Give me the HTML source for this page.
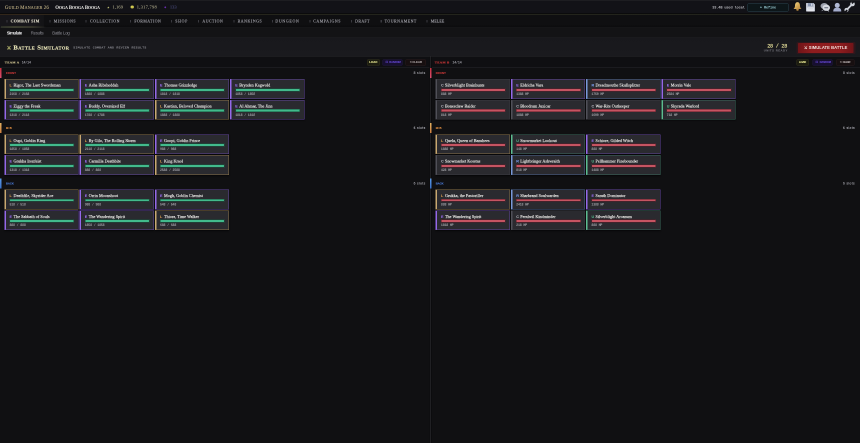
<!DOCTYPE html>
<html><head><meta charset="utf-8"><style>
html,body{margin:0;padding:0;background:#101012;width:860px;height:443px;overflow:hidden}
#root{position:absolute;left:0;top:0;width:1720px;height:886px;transform:scale(.5);transform-origin:0 0;will-change:transform;background:#101012;font-family:"Liberation Sans",sans-serif;overflow:hidden}
.abs{position:absolute}
.t{position:absolute;white-space:nowrap}
.sc{font-size:84%}
.ni{top:40px;width:2px;height:5px;background:#3a3a40}
.lab{font-size:7.2px;line-height:7.2px;font-weight:bold;letter-spacing:.7px}
.slots{font-size:7px;line-height:7px;color:#86868e}
.card{position:absolute;box-sizing:border-box;width:148.5px;height:39.4px;background:#2a2a2f;border:1.2px solid;border-left-width:3.2px;box-shadow:0 1.5px 2.5px rgba(0,0,0,.6)}
.nm{position:absolute;left:7.6px;top:5.8px;font-family:'Liberation Serif',serif;font-weight:normal;font-size:8.3px;line-height:12px;color:#ecebe8;white-space:nowrap;letter-spacing:.05px;-webkit-text-stroke:.25px #ecebe8}
.rl{display:inline-block;width:8px;font-family:"Liberation Sans",sans-serif;font-size:7.4px;font-weight:bold;-webkit-text-stroke:0}
.bar{position:absolute;left:7.6px;right:7.8px;top:17.4px;height:5.8px;border-radius:1.2px}
.ba{background:#42ba8c;box-shadow:inset 0 0 0 1.1px #17523c}
.bb{background:#c65462;box-shadow:inset 0 0 0 1.1px #581c26}
.hp{position:absolute;left:7.4px;top:24.6px;font-family:'Liberation Mono',monospace;font-size:6.6px;line-height:9px;color:#9c9ca2;white-space:nowrap;font-weight:bold;letter-spacing:-.36px}
</style></head><body><div id="root">
<div class="abs" style="left:0;top:0;width:1720px;height:27px;background:#121217"></div>
<div class="abs" style="left:0;top:0;width:1720px;height:1.6px;background:#1d1d21"></div>
<div class="abs" style="left:0;top:25.5px;width:1720px;height:2.2px;background:#0b0b0c"></div>
<div class="abs" style="left:0;top:27.7px;width:1720px;height:2px;background:linear-gradient(90deg,#32261a,#2a261c 12%,#23241c 40%,#22231c)"></div>
<div class="t" id="t13" style="left:9.80px;top:9.80px;font-family:'Liberation Serif',serif;font-size:9.800px;line-height:9.8px;color:#ccbc8c;letter-spacing:0.227px;-webkit-text-stroke:.12px #ccbc8c;">G<span class="sc">UILD</span> M<span class="sc">ANAGER</span> 26</div>
<div class="t" id="t14" style="left:110.60px;top:10.10px;font-family:'Liberation Serif',serif;font-size:9.600px;line-height:9.6px;color:#f4f2ee;letter-spacing:-0.228px;font-weight:bold;">O<span class="sc">OGA</span> B<span class="sc">OOGA</span> B<span class="sc">OOGA</span></div>
<div class="t" id="t15" style="left:214.20px;top:11.59px;font-family:'Liberation Sans',sans-serif;font-size:6.000px;line-height:6px;color:#c8c878;letter-spacing:0.000px;">&#9733;</div>
<div class="t" id="t16" style="left:224.80px;top:10.01px;font-family:'Liberation Serif',serif;font-size:9.000px;line-height:9.0px;color:#cdc8a0;letter-spacing:0.237px;">1,169</div>
<div class="abs" style="left:260.5px;top:10.5px;width:7px;height:6.5px;border-radius:50%;background:radial-gradient(circle at 40% 40%,#e0d860,#a8a030)"></div>
<div class="t" id="t17" style="left:273.40px;top:10.01px;font-family:'Liberation Serif',serif;font-size:9.000px;line-height:9.0px;color:#cdc8a0;letter-spacing:0.500px;">1,317,798</div>
<div class="abs" style="left:329.2px;top:13px;width:2.8px;height:3px;background:#7030b8;transform:rotate(45deg)"></div>
<div class="t" id="t18" style="left:339.80px;top:10.01px;font-family:'Liberation Serif',serif;font-size:9.000px;line-height:9.0px;color:#5a5c9c;letter-spacing:-0.050px;">133</div>
<div class="t" id="t19" style="left:1424.40px;top:11.65px;font-family:'Liberation Mono',monospace;font-size:7.200px;line-height:7.2px;color:#b4b4ba;letter-spacing:-0.254px;font-weight:bold;">33.4B used local</div>
<div class="abs" style="left:1495.4px;top:6.6px;width:81.4px;height:16.2px;box-sizing:border-box;border:1.2px solid #284650;background:#0d1619;border-radius:1.5px"></div>
<div class="t" id="t20" style="left:1519.80px;top:11.65px;font-family:'Liberation Mono',monospace;font-size:7.200px;line-height:7.2px;color:#94c4cc;letter-spacing:-0.274px;font-weight:bold;">+ Refine</div>
<svg class="abs" style="left:1584px;top:3px" width="22" height="20" viewBox="0 0 22 20"><defs><linearGradient id="bg1" x1="0" y1="0" x2="1" y2="1"><stop offset="0" stop-color="#f0d890"/><stop offset=".5" stop-color="#d8ac58"/><stop offset="1" stop-color="#b08040"/></linearGradient></defs><path d="M11 1.2 C7.6 1.2 6 4.5 6 8.5 C6 11.5 4.8 13.3 3 15 L19 15 C17.2 13.3 16 11.5 16 8.5 C16 4.5 14.4 1.2 11 1.2Z" fill="url(#bg1)"/><ellipse cx="11" cy="16.6" rx="2.6" ry="2" fill="#b88a40"/></svg>
<svg class="abs" style="left:1611px;top:5px" width="20" height="19" viewBox="0 0 20 19"><path d="M1 2 Q1 1 2 1 L16 1 L19 4 L19 17 Q19 18 18 18 L2 18 Q1 18 1 17Z" fill="#c0c4d0"/><rect x="5" y="1" width="10" height="6.5" fill="#8a96b0"/><rect x="11.2" y="2" width="2.4" height="4.5" fill="#dfe2ea"/><rect x="3.5" y="10" width="13" height="8" fill="#eceef4"/><rect x="5" y="12" width="10" height=".8" fill="#b8bcc8"/><rect x="5" y="14.5" width="10" height=".8" fill="#b8bcc8"/></svg>
<svg class="abs" style="left:1640px;top:4.5px" width="21" height="19" viewBox="0 0 21 19"><ellipse cx="8.5" cy="7" rx="7.5" ry="6" fill="#9ca0ac"/><path d="M4 15 L3 17.5 L7 15.5Z" fill="#9ca0ac"/><ellipse cx="12.5" cy="10.5" rx="7.5" ry="6.3" fill="#d6d9e0"/><path d="M17 15.5 L18.5 18.5 L14 16.3Z" fill="#d6d9e0"/><rect x="8.5" y="9.6" width="8" height="2" rx="1" fill="#5e6474"/></svg>
<svg class="abs" style="left:1665px;top:4px" width="19" height="20" viewBox="0 0 19 20"><path d="M1.5 19 C1.5 13 4.5 11.5 9.5 11.5 C14.5 11.5 17.5 13 17.5 19Z" fill="#a4accc"/><circle cx="9.5" cy="6.8" r="5" fill="#b0b8d4"/></svg>
<svg class="abs" style="left:1688px;top:3px" width="24" height="22" viewBox="0 0 24 22"><path d="M6 16 L16 6" stroke="#cfd2da" stroke-width="3.8" stroke-linecap="round"/><circle cx="17" cy="5" r="4.6" fill="#cfd2da"/><rect x="16" y="-1.5" width="3.6" height="6" fill="#121217" transform="rotate(45 17.8 1.5)"/><circle cx="5" cy="17" r="4.2" fill="#cfd2da"/><rect x="2.6" y="16.5" width="3.6" height="6" fill="#121217" transform="rotate(45 4.4 19.5)"/></svg>
<div class="abs" style="left:0;top:29.7px;width:1720px;height:25px;background:linear-gradient(#0f0f11 75%,#0b0b0c)"></div>
<div class="abs" style="left:0;top:29.7px;width:88px;height:25px;background:linear-gradient(90deg,#17161a,#18171b 70%,#131315)"></div>
<div class="abs" style="left:2px;top:52.5px;width:90px;height:3px;background:linear-gradient(90deg,#3e4430,#5c6040 30%,#4a4a34 70%,rgba(60,60,40,0))"></div>
<div class="abs ni" style="left:12.6px"></div>
<div class="t" id="t1" style="left:21.20px;top:39.42px;font-family:'Liberation Serif',serif;font-size:7.800px;line-height:7.8px;color:#ece8d6;letter-spacing:0.706px;font-weight:bold;-webkit-text-stroke:.15px #ece8d6;">COMBAT SIM</div>
<div class="abs ni" style="left:98.8px"></div>
<div class="t" id="t2" style="left:107.40px;top:39.42px;font-family:'Liberation Serif',serif;font-size:7.800px;line-height:7.8px;color:#a0a0a8;letter-spacing:1.056px;-webkit-text-stroke:.25px #a0a0a8;">MISSIONS</div>
<div class="abs ni" style="left:171px"></div>
<div class="t" id="t3" style="left:180.00px;top:39.42px;font-family:'Liberation Serif',serif;font-size:7.800px;line-height:7.8px;color:#a0a0a8;letter-spacing:1.094px;-webkit-text-stroke:.25px #a0a0a8;">COLLECTION</div>
<div class="abs ni" style="left:260.2px"></div>
<div class="t" id="t4" style="left:268.80px;top:39.42px;font-family:'Liberation Serif',serif;font-size:7.800px;line-height:7.8px;color:#a0a0a8;letter-spacing:0.913px;-webkit-text-stroke:.25px #a0a0a8;">FORMATION</div>
<div class="abs ni" style="left:341.8px"></div>
<div class="t" id="t5" style="left:350.40px;top:39.42px;font-family:'Liberation Serif',serif;font-size:7.800px;line-height:7.8px;color:#a0a0a8;letter-spacing:1.421px;-webkit-text-stroke:.25px #a0a0a8;">SHOP</div>
<div class="abs ni" style="left:396.2px"></div>
<div class="t" id="t6" style="left:404.80px;top:39.42px;font-family:'Liberation Serif',serif;font-size:7.800px;line-height:7.8px;color:#a0a0a8;letter-spacing:0.951px;-webkit-text-stroke:.25px #a0a0a8;">AUCTION</div>
<div class="abs ni" style="left:467.2px"></div>
<div class="t" id="t7" style="left:475.20px;top:39.42px;font-family:'Liberation Serif',serif;font-size:7.800px;line-height:7.8px;color:#a0a0a8;letter-spacing:1.129px;-webkit-text-stroke:.25px #a0a0a8;">RANKINGS</div>
<div class="abs ni" style="left:543.6px"></div>
<div class="t" id="t8" style="left:550.80px;top:39.42px;font-family:'Liberation Serif',serif;font-size:7.800px;line-height:7.8px;color:#a0a0a8;letter-spacing:1.376px;-webkit-text-stroke:.25px #a0a0a8;">DUNGEON</div>
<div class="abs ni" style="left:619px"></div>
<div class="t" id="t9" style="left:626.40px;top:39.42px;font-family:'Liberation Serif',serif;font-size:7.800px;line-height:7.8px;color:#a0a0a8;letter-spacing:1.148px;-webkit-text-stroke:.25px #a0a0a8;">CAMPAIGNS</div>
<div class="abs ni" style="left:701.6px"></div>
<div class="t" id="t10" style="left:710.20px;top:39.42px;font-family:'Liberation Serif',serif;font-size:7.800px;line-height:7.8px;color:#a0a0a8;letter-spacing:0.809px;-webkit-text-stroke:.25px #a0a0a8;">DRAFT</div>
<div class="abs ni" style="left:760.6px"></div>
<div class="t" id="t11" style="left:769.20px;top:39.42px;font-family:'Liberation Serif',serif;font-size:7.800px;line-height:7.8px;color:#a0a0a8;letter-spacing:0.996px;-webkit-text-stroke:.25px #a0a0a8;">TOURNAMENT</div>
<div class="abs ni" style="left:852.8px"></div>
<div class="t" id="t12" style="left:861.40px;top:39.42px;font-family:'Liberation Serif',serif;font-size:7.800px;line-height:7.8px;color:#a0a0a8;letter-spacing:0.304px;-webkit-text-stroke:.25px #a0a0a8;">MELEE</div>
<div class="abs" style="left:0;top:54.6px;width:1720px;height:1.4px;background:#1f1f22"></div>
<div class="abs" style="left:0;top:56px;width:1720px;height:19px;background:#131315"></div>
<div class="t" id="t21" style="left:13.40px;top:62.48px;font-family:'Liberation Sans',sans-serif;font-size:8.600px;line-height:8.6px;color:#f0f0f2;letter-spacing:-0.690px;font-weight:bold;">Simulate</div>
<div class="abs" style="left:6px;top:75.8px;width:46.5px;height:2px;background:#b4b4b8"></div>
<div class="t" id="t22" style="left:61.60px;top:62.48px;font-family:'Liberation Sans',sans-serif;font-size:8.600px;line-height:8.6px;color:#8c8c94;letter-spacing:-0.509px;">Results</div>
<div class="t" id="t23" style="left:104.60px;top:62.48px;font-family:'Liberation Sans',sans-serif;font-size:8.600px;line-height:8.6px;color:#8c8c94;letter-spacing:-0.411px;">Battle Log</div>
<div class="abs" style="left:0;top:74.8px;width:1720px;height:1.4px;background:#212125"></div>
<div class="abs" style="left:0;top:76.2px;width:1720px;height:36px;background:linear-gradient(#18181c,#1a1a1e)"></div>
<div class="abs" style="left:0;top:111.6px;width:1720px;height:1.6px;background:#28282c"></div>
<svg class="abs" style="left:13.5px;top:91px" width="8" height="9" viewBox="0 0 8 9"><path d="M1 1 L7 8 M7 1 L1 8" stroke="#c8c878" stroke-width="1.3"/><path d="M0.5 6 L2.5 8.5 M7.5 6 L5.5 8.5" stroke="#c8c878" stroke-width="1"/></svg>
<div class="t" id="t24" style="left:26.80px;top:87.87px;font-family:'Liberation Serif',serif;font-size:13.200px;line-height:13.2px;color:#e6e2b6;letter-spacing:0.816px;font-weight:bold;font-variant:small-caps;-webkit-text-stroke:.35px #e6e2b6;">Battle Simulator</div>
<div class="t" id="t25" style="left:146.60px;top:93.09px;font-family:'Liberation Mono',monospace;font-size:6.200px;line-height:6.2px;color:#9a9aa2;letter-spacing:0.598px;-webkit-text-stroke:.15px #9a9aa2;">SIMULATE COMBAT AND REVIEW RESULTS</div>
<div class="t" id="t26" style="left:1534.40px;top:87.06px;font-family:'Liberation Mono',monospace;font-size:10.400px;line-height:10.4px;color:#e2dc98;letter-spacing:-0.543px;-webkit-text-stroke:.35px #e2dc98;">28 / 28</div>
<div class="t" id="t27" style="left:1527.40px;top:98.59px;font-family:'Liberation Sans',sans-serif;font-size:5.600px;line-height:5.6px;color:#7c7c84;letter-spacing:0.948px;font-weight:bold;">UNITS READY</div>
<div class="abs" style="left:1593px;top:83.5px;width:118px;height:24.5px;background:rgba(90,20,30,.35);border-radius:3px"></div>
<div class="abs" style="left:1595.8px;top:85.8px;width:111px;height:20.2px;background:linear-gradient(90deg,#701418,#8e1c1e 25%,#8e1c1e 75%,#701418);border-radius:1.5px"></div>
<div class="t" id="t28" style="left:1608.00px;top:92.08px;font-family:'Liberation Sans',sans-serif;font-size:8.200px;line-height:8.2px;color:#f2e4e0;letter-spacing:0.133px;font-weight:bold;">&#9876; SIMULATE BATTLE</div>
<div class="abs" style="left:0;top:112.7px;width:1720px;height:21.5px;background:#0f0f12"></div>
<div class="abs" style="left:0;top:134px;width:1720px;height:1.2px;background:#26252b"></div>
<div class="abs" style="left:858.8px;top:112.7px;width:4.8px;height:774px;background:#0c0c0e"></div>
<div class="abs" style="left:859.8px;top:112.7px;width:2.6px;height:774px;background:#202023"></div>
<div class="t" id="t29" style="left:9.60px;top:122.03px;font-family:'Liberation Serif',serif;font-size:6.600px;line-height:6.6px;color:#dcd09a;letter-spacing:0.554px;font-weight:bold;-webkit-text-stroke:.2px #dcd09a;">TEAM A</div>
<div class="t" id="t30" style="left:43.40px;top:122.92px;font-family:'Liberation Mono',monospace;font-size:6.600px;line-height:6.6px;color:#9a9aa2;letter-spacing:-0.299px;font-weight:bold;">14/14</div>
<div class="abs" style="left:734px;top:118.6px;width:26px;height:12px;box-sizing:border-box;border:1px solid #34341c;background:#1c1c10;border-radius:1.5px"></div>
<div class="t" id="t31" style="left:738.40px;top:121.59px;font-family:'Liberation Sans',sans-serif;font-size:5.600px;line-height:5.6px;color:#eaea94;letter-spacing:0.180px;font-weight:bold;-webkit-text-stroke:.2px #eaea94;">LOAD</div>
<div class="abs" style="left:764.6px;top:118.6px;width:40.0px;height:12px;box-sizing:border-box;border:1px solid #231846;background:#170f30;border-radius:1.5px"></div>
<div class="t" id="t32" style="left:770.60px;top:121.39px;font-family:'Liberation Sans',sans-serif;font-size:6.000px;line-height:6px;color:#6a4ae0;letter-spacing:0.000px;">&#9860;</div>
<div class="t" id="t33" style="left:778.60px;top:121.69px;font-family:'Liberation Sans',sans-serif;font-size:5.400px;line-height:5.4px;color:#6c4ce4;letter-spacing:-0.253px;font-weight:bold;">RANDOM</div>
<div class="abs" style="left:811.2px;top:118.6px;width:40.799999999999955px;height:12px;box-sizing:border-box;border:1px solid #2a1a1c;background:#170f10;border-radius:1.5px"></div>
<div class="t" id="t34" style="left:818.80px;top:121.59px;font-family:'Liberation Sans',sans-serif;font-size:5.600px;line-height:5.6px;color:#c8c0c0;letter-spacing:0.000px;">&#10005;</div>
<div class="t" id="t35" style="left:824.80px;top:121.69px;font-family:'Liberation Sans',sans-serif;font-size:5.400px;line-height:5.4px;color:#ccc4c4;letter-spacing:0.155px;font-weight:bold;">CLEAR</div>
<div class="t" id="t36" style="left:869.60px;top:122.03px;font-family:'Liberation Serif',serif;font-size:6.600px;line-height:6.6px;color:#d83a3a;letter-spacing:0.594px;font-weight:bold;-webkit-text-stroke:.2px #d83a3a;">TEAM B</div>
<div class="t" id="t37" style="left:904.80px;top:122.92px;font-family:'Liberation Mono',monospace;font-size:6.600px;line-height:6.6px;color:#9a9aa2;letter-spacing:-0.299px;font-weight:bold;">14/14</div>
<div class="abs" style="left:1593.4px;top:118.6px;width:24.199999999999818px;height:12px;box-sizing:border-box;border:1px solid #34341c;background:#1c1c10;border-radius:1.5px"></div>
<div class="t" id="t38" style="left:1597.80px;top:121.59px;font-family:'Liberation Sans',sans-serif;font-size:5.600px;line-height:5.6px;color:#eaea94;letter-spacing:-0.420px;font-weight:bold;-webkit-text-stroke:.2px #eaea94;">LOAD</div>
<div class="abs" style="left:1625.2px;top:118.6px;width:39.799999999999955px;height:12px;box-sizing:border-box;border:1px solid #231846;background:#170f30;border-radius:1.5px"></div>
<div class="t" id="t39" style="left:1631.20px;top:121.39px;font-family:'Liberation Sans',sans-serif;font-size:6.000px;line-height:6px;color:#6a4ae0;letter-spacing:0.000px;">&#9860;</div>
<div class="t" id="t40" style="left:1639.20px;top:121.69px;font-family:'Liberation Sans',sans-serif;font-size:5.400px;line-height:5.4px;color:#6c4ce4;letter-spacing:-0.293px;font-weight:bold;">RANDOM</div>
<div class="abs" style="left:1671.6px;top:118.6px;width:37.200000000000045px;height:12px;box-sizing:border-box;border:1px solid #2a1a1c;background:#170f10;border-radius:1.5px"></div>
<div class="t" id="t41" style="left:1679.20px;top:121.59px;font-family:'Liberation Sans',sans-serif;font-size:5.600px;line-height:5.6px;color:#c8c0c0;letter-spacing:0.000px;">&#10005;</div>
<div class="t" id="t42" style="left:1685.20px;top:121.69px;font-family:'Liberation Sans',sans-serif;font-size:5.400px;line-height:5.4px;color:#ccc4c4;letter-spacing:-0.745px;font-weight:bold;">CLEAR</div>
<div class="abs" style="left:0px;top:136.0px;width:3.2px;height:20px;background:linear-gradient(#c83040,#d85070)"></div>
<div class="t" id="t43" style="left:11.80px;top:143.79px;font-family:'Liberation Sans',sans-serif;font-size:5.600px;line-height:5.6px;color:#c83838;letter-spacing:0.234px;font-weight:bold;-webkit-text-stroke:.2px #c83838;">FRONT</div>
<div class="t" id="t44" style="left:827.20px;top:142.78px;font-family:'Liberation Sans',sans-serif;font-size:6.400px;line-height:6.4px;color:#b0b0b8;letter-spacing:0.786px;-webkit-text-stroke:.15px #b0b0b8;">8 slots</div>
<div class="card" style="left:8.50px;top:158.40px;border-color:#8a7248;border-left-color:#c8a870"><div class="nm"><span class="rl" style="color:#eaa850">L</span>Rigor, The Last Swordsman</div><div class="bar ba"></div><div class="hp">2168 / 2168</div></div>
<div class="card" style="left:159.00px;top:158.40px;border-color:#62469c;border-left-color:#9468e8"><div class="nm"><span class="rl" style="color:#a070ff">E</span>Asha Ribsheddah</div><div class="bar ba"></div><div class="hp">1888 / 1888</div></div>
<div class="card" style="left:309.50px;top:158.40px;border-color:#62469c;border-left-color:#9468e8"><div class="nm"><span class="rl" style="color:#a070ff">E</span>Thomas Grizzledge</div><div class="bar ba"></div><div class="hp">1818 / 1818</div></div>
<div class="card" style="left:460.00px;top:158.40px;border-color:#62469c;border-left-color:#9468e8"><div class="nm"><span class="rl" style="color:#a070ff">E</span>Brynden Kagwold</div><div class="bar ba"></div><div class="hp">1858 / 1858</div></div>
<div class="card" style="left:8.50px;top:200.00px;border-color:#62469c;border-left-color:#9468e8"><div class="nm"><span class="rl" style="color:#a070ff">E</span>Ziggy the Freak</div><div class="bar ba"></div><div class="hp">1318 / 2118</div></div>
<div class="card" style="left:159.00px;top:200.00px;border-color:#62469c;border-left-color:#9468e8"><div class="nm"><span class="rl" style="color:#a070ff">E</span>Buddy, Oversized Elf</div><div class="bar ba"></div><div class="hp">1788 / 1788</div></div>
<div class="card" style="left:309.50px;top:200.00px;border-color:#8a7248;border-left-color:#c8a870"><div class="nm"><span class="rl" style="color:#eaa850">L</span>Kastian, Beloved Champion</div><div class="bar ba"></div><div class="hp">1888 / 1888</div></div>
<div class="card" style="left:460.00px;top:200.00px;border-color:#62469c;border-left-color:#9468e8"><div class="nm"><span class="rl" style="color:#a070ff">E</span>Al Ahmar, The Jinn</div><div class="bar ba"></div><div class="hp">1818 / 1818</div></div>
<div class="abs" style="left:0px;top:246.4px;width:3.2px;height:20px;background:linear-gradient(#e0b060,#d08040)"></div>
<div class="t" id="t45" style="left:11.80px;top:254.19px;font-family:'Liberation Sans',sans-serif;font-size:5.600px;line-height:5.6px;color:#d88a40;letter-spacing:0.867px;font-weight:bold;-webkit-text-stroke:.2px #d88a40;">MID</div>
<div class="t" id="t46" style="left:827.20px;top:253.18px;font-family:'Liberation Sans',sans-serif;font-size:6.400px;line-height:6.4px;color:#b0b0b8;letter-spacing:0.786px;-webkit-text-stroke:.15px #b0b0b8;">6 slots</div>
<div class="card" style="left:8.50px;top:268.80px;border-color:#8a7248;border-left-color:#c8a870"><div class="nm"><span class="rl" style="color:#eaa850">L</span>Oupi, Goblin King</div><div class="bar ba"></div><div class="hp">1858 / 1858</div></div>
<div class="card" style="left:159.00px;top:268.80px;border-color:#8a7248;border-left-color:#c8a870"><div class="nm"><span class="rl" style="color:#eaa850">L</span>Ry Gilo, The Rolling Storm</div><div class="bar ba"></div><div class="hp">2118 / 2118</div></div>
<div class="card" style="left:309.50px;top:268.80px;border-color:#62469c;border-left-color:#9468e8"><div class="nm"><span class="rl" style="color:#a070ff">E</span>Goopi, Goblin Prince</div><div class="bar ba"></div><div class="hp">988 / 988</div></div>
<div class="card" style="left:8.50px;top:310.40px;border-color:#62469c;border-left-color:#9468e8"><div class="nm"><span class="rl" style="color:#a070ff">E</span>Grukha Ironfeist</div><div class="bar ba"></div><div class="hp">1318 / 1318</div></div>
<div class="card" style="left:159.00px;top:310.40px;border-color:#62469c;border-left-color:#9468e8"><div class="nm"><span class="rl" style="color:#a070ff">E</span>Carmilla Deathbite</div><div class="bar ba"></div><div class="hp">888 / 888</div></div>
<div class="card" style="left:309.50px;top:310.40px;border-color:#8a7248;border-left-color:#c8a870"><div class="nm"><span class="rl" style="color:#eaa850">L</span>King Kraol</div><div class="bar ba"></div><div class="hp">2588 / 2588</div></div>
<div class="abs" style="left:0px;top:356.8px;width:3.2px;height:20px;background:linear-gradient(#5a9ae8,#3a70c8)"></div>
<div class="t" id="t47" style="left:11.80px;top:364.59px;font-family:'Liberation Sans',sans-serif;font-size:5.600px;line-height:5.6px;color:#4a7ad8;letter-spacing:-0.057px;font-weight:bold;-webkit-text-stroke:.2px #4a7ad8;">BACK</div>
<div class="t" id="t48" style="left:827.20px;top:363.58px;font-family:'Liberation Sans',sans-serif;font-size:6.400px;line-height:6.4px;color:#b0b0b8;letter-spacing:0.786px;-webkit-text-stroke:.15px #b0b0b8;">6 slots</div>
<div class="card" style="left:8.50px;top:379.20px;border-color:#8a7248;border-left-color:#c8a870"><div class="nm"><span class="rl" style="color:#eaa850">L</span>Deathfile, Skyrider Ace</div><div class="bar ba"></div><div class="hp">518 / 518</div></div>
<div class="card" style="left:159.00px;top:379.20px;border-color:#62469c;border-left-color:#9468e8"><div class="nm"><span class="rl" style="color:#a070ff">E</span>Orrin Moonshoot</div><div class="bar ba"></div><div class="hp">988 / 988</div></div>
<div class="card" style="left:309.50px;top:379.20px;border-color:#62469c;border-left-color:#9468e8"><div class="nm"><span class="rl" style="color:#a070ff">E</span>Mogh, Goblin Chemist</div><div class="bar ba"></div><div class="hp">548 / 548</div></div>
<div class="card" style="left:8.50px;top:420.80px;border-color:#62469c;border-left-color:#9468e8"><div class="nm"><span class="rl" style="color:#a070ff">E</span>The Sabbath of Souls</div><div class="bar ba"></div><div class="hp">888 / 888</div></div>
<div class="card" style="left:159.00px;top:420.80px;border-color:#62469c;border-left-color:#9468e8"><div class="nm"><span class="rl" style="color:#a070ff">E</span>The Wandering Spirit</div><div class="bar ba"></div><div class="hp">1858 / 1858</div></div>
<div class="card" style="left:309.50px;top:420.80px;border-color:#8a7248;border-left-color:#c8a870"><div class="nm"><span class="rl" style="color:#eaa850">L</span>Thiora, Time Walker</div><div class="bar ba"></div><div class="hp">688 / 688</div></div>
<div class="abs" style="left:859.6px;top:136.0px;width:3.2px;height:20px;background:linear-gradient(#c83040,#d85070)"></div>
<div class="t" id="t49" style="left:871.40px;top:143.79px;font-family:'Liberation Sans',sans-serif;font-size:5.600px;line-height:5.6px;color:#c83838;letter-spacing:0.234px;font-weight:bold;-webkit-text-stroke:.2px #c83838;">FRONT</div>
<div class="t" id="t50" style="left:1686.00px;top:142.78px;font-family:'Liberation Sans',sans-serif;font-size:6.400px;line-height:6.4px;color:#b0b0b8;letter-spacing:0.786px;-webkit-text-stroke:.15px #b0b0b8;">8 slots</div>
<div class="card" style="left:871.40px;top:158.40px;border-color:#3a3a40;border-left-color:#505058"><div class="nm"><span class="rl" style="color:#c0c0c8">C</span>Silverblight Brainhunts</div><div class="bar bb"></div><div class="hp">888 HP</div></div>
<div class="card" style="left:1021.90px;top:158.40px;border-color:#62469c;border-left-color:#9468e8"><div class="nm"><span class="rl" style="color:#a070ff">E</span>Eldricha Vara</div><div class="bar bb"></div><div class="hp">1388 HP</div></div>
<div class="card" style="left:1172.40px;top:158.40px;border-color:#4c6490;border-left-color:#7898d8"><div class="nm"><span class="rl" style="color:#80a8ff">R</span>Dreadmouthe Skullsplitter</div><div class="bar bb"></div><div class="hp">1750 HP</div></div>
<div class="card" style="left:1322.90px;top:158.40px;border-color:#62469c;border-left-color:#9468e8"><div class="nm"><span class="rl" style="color:#a070ff">E</span>Morrin Vale</div><div class="bar bb"></div><div class="hp">2584 HP</div></div>
<div class="card" style="left:871.40px;top:200.00px;border-color:#3a3a40;border-left-color:#505058"><div class="nm"><span class="rl" style="color:#c0c0c8">C</span>Bonesclaw Raider</div><div class="bar bb"></div><div class="hp">818 HP</div></div>
<div class="card" style="left:1021.90px;top:200.00px;border-color:#3a3a40;border-left-color:#505058"><div class="nm"><span class="rl" style="color:#c0c0c8">C</span>Bloodrum Juxicar</div><div class="bar bb"></div><div class="hp">1888 HP</div></div>
<div class="card" style="left:1172.40px;top:200.00px;border-color:#3a3a40;border-left-color:#505058"><div class="nm"><span class="rl" style="color:#c0c0c8">C</span>War-Rite Outkeeper</div><div class="bar bb"></div><div class="hp">1600 HP</div></div>
<div class="card" style="left:1322.90px;top:200.00px;border-color:#3c6a5c;border-left-color:#5cbc90"><div class="nm"><span class="rl" style="color:#58c090">U</span>Skyrada Warlord</div><div class="bar bb"></div><div class="hp">718 HP</div></div>
<div class="abs" style="left:859.6px;top:246.4px;width:3.2px;height:20px;background:linear-gradient(#e0b060,#d08040)"></div>
<div class="t" id="t51" style="left:871.40px;top:254.19px;font-family:'Liberation Sans',sans-serif;font-size:5.600px;line-height:5.6px;color:#d88a40;letter-spacing:0.867px;font-weight:bold;-webkit-text-stroke:.2px #d88a40;">MID</div>
<div class="t" id="t52" style="left:1686.00px;top:253.18px;font-family:'Liberation Sans',sans-serif;font-size:6.400px;line-height:6.4px;color:#b0b0b8;letter-spacing:0.786px;-webkit-text-stroke:.15px #b0b0b8;">6 slots</div>
<div class="card" style="left:871.40px;top:268.80px;border-color:#8a7248;border-left-color:#c8a870"><div class="nm"><span class="rl" style="color:#eaa850">L</span>Quela, Queen of Banshees</div><div class="bar bb"></div><div class="hp">1888 HP</div></div>
<div class="card" style="left:1021.90px;top:268.80px;border-color:#3c6a5c;border-left-color:#5cbc90"><div class="nm"><span class="rl" style="color:#58c090">U</span>Snowmarket Lookout</div><div class="bar bb"></div><div class="hp">148 HP</div></div>
<div class="card" style="left:1172.40px;top:268.80px;border-color:#62469c;border-left-color:#9468e8"><div class="nm"><span class="rl" style="color:#a070ff">E</span>Schiore, Gilded Witch</div><div class="bar bb"></div><div class="hp">888 HP</div></div>
<div class="card" style="left:871.40px;top:310.40px;border-color:#3a3a40;border-left-color:#505058"><div class="nm"><span class="rl" style="color:#c0c0c8">C</span>Snowmarket Kosstas</div><div class="bar bb"></div><div class="hp">428 HP</div></div>
<div class="card" style="left:1021.90px;top:310.40px;border-color:#4c6490;border-left-color:#7898d8"><div class="nm"><span class="rl" style="color:#80a8ff">R</span>Lightbringer Ashwraith</div><div class="bar bb"></div><div class="hp">818 HP</div></div>
<div class="card" style="left:1172.40px;top:310.40px;border-color:#3c6a5c;border-left-color:#5cbc90"><div class="nm"><span class="rl" style="color:#58c090">U</span>Pellhammer Pinebounder</div><div class="bar bb"></div><div class="hp">1488 HP</div></div>
<div class="abs" style="left:859.6px;top:356.8px;width:3.2px;height:20px;background:linear-gradient(#5a9ae8,#3a70c8)"></div>
<div class="t" id="t53" style="left:871.40px;top:364.59px;font-family:'Liberation Sans',sans-serif;font-size:5.600px;line-height:5.6px;color:#4a7ad8;letter-spacing:-0.057px;font-weight:bold;-webkit-text-stroke:.2px #4a7ad8;">BACK</div>
<div class="t" id="t54" style="left:1686.00px;top:363.58px;font-family:'Liberation Sans',sans-serif;font-size:6.400px;line-height:6.4px;color:#b0b0b8;letter-spacing:0.786px;-webkit-text-stroke:.15px #b0b0b8;">6 slots</div>
<div class="card" style="left:871.40px;top:379.20px;border-color:#8a7248;border-left-color:#c8a870"><div class="nm"><span class="rl" style="color:#eaa850">L</span>Grukka, the Pastoriller</div><div class="bar bb"></div><div class="hp">888 HP</div></div>
<div class="card" style="left:1021.90px;top:379.20px;border-color:#4c6490;border-left-color:#7898d8"><div class="nm"><span class="rl" style="color:#80a8ff">R</span>Sharbrand Soulwarden</div><div class="bar bb"></div><div class="hp">2418 HP</div></div>
<div class="card" style="left:1172.40px;top:379.20px;border-color:#62469c;border-left-color:#9468e8"><div class="nm"><span class="rl" style="color:#a070ff">E</span>Sarath Dominator</div><div class="bar bb"></div><div class="hp">1388 HP</div></div>
<div class="card" style="left:871.40px;top:420.80px;border-color:#62469c;border-left-color:#9468e8"><div class="nm"><span class="rl" style="color:#a070ff">E</span>The Wandering Spirit</div><div class="bar bb"></div><div class="hp">1818 HP</div></div>
<div class="card" style="left:1021.90px;top:420.80px;border-color:#3a3a40;border-left-color:#505058"><div class="nm"><span class="rl" style="color:#c0c0c8">C</span>Peralwil Kindminder</div><div class="bar bb"></div><div class="hp">218 HP</div></div>
<div class="card" style="left:1172.40px;top:420.80px;border-color:#3c6a5c;border-left-color:#5cbc90"><div class="nm"><span class="rl" style="color:#58c090">U</span>Silverblight Arcanum</div><div class="bar bb"></div><div class="hp">888 HP</div></div>
</div></body></html>
